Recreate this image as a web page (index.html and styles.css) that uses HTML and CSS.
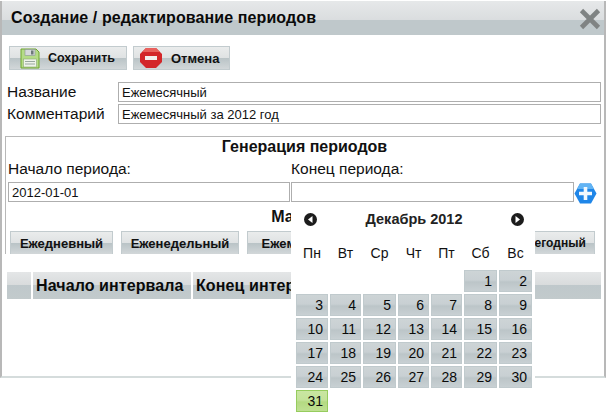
FILE: index.html
```html
<!DOCTYPE html>
<html lang="ru">
<head>
<meta charset="utf-8">
<title>Создание / редактирование периодов</title>
<link rel="stylesheet" href="styles.css">
</head>
<body>
<div class="dialog">
  <header class="titlebar">
    <h1 class="title">Создание / редактирование периодов</h1>
    <svg class="close" width="22" height="22" viewBox="0 0 22 22"><path d="M2.5 2.5 L19.5 19.5 M19.5 2.5 L2.5 19.5" stroke="#7f8383" stroke-width="4.6" fill="none"/></svg>
  </header>
  <div class="toolbar">
    <button class="btn btn-save" type="button">
      <svg class="btn-icon" width="20" height="21" viewBox="0 0 20 21">
        <path d="M1 1 H16 L19 4 V20 H1 Z" fill="#b5dc87" stroke="#6fa52f"/>
        <rect x="5" y="1.5" width="10" height="6" fill="#d6dadb" stroke="#8a9494" stroke-width=".6"/>
        <rect x="11" y="2.5" width="2.5" height="4" fill="#6d7878"/>
        <rect x="3.5" y="11" width="13" height="8" fill="#eef3ea" stroke="#8aa873" stroke-width=".6"/>
        <path d="M5 13.5 H15 M5 16 H15" stroke="#9aa8a0"/>
      </svg>
      <span>Сохранить</span>
    </button>
    <button class="btn btn-cancel" type="button">
      <svg class="btn-icon" width="22" height="20" viewBox="0 0 22 20">
        <path d="M6 0 H16 L22 6 V14 L16 20 H6 L0 14 V6 Z" fill="#d3262a"/>
        <path d="M6 0 H16 L20 4 H2 Z" fill="#e8605c"/>
        <rect x="5" y="8" width="12" height="4" fill="#f2eeee"/>
      </svg>
      <span>Отмена</span>
    </button>
  </div>
  <div class="form-row"><label class="form-label">Название</label><input class="input" type="text" value="Ежемесячный"></div>
  <div class="form-row"><label class="form-label">Комментарий</label><input class="input" type="text" value="Ежемесячный за 2012 год"></div>
  <section class="generator">
    <h2 class="section-title">Генерация периодов</h2>
    <div class="period-grid">
      <label class="period-label">Начало периода:</label>
      <label class="period-label">Конец периода:</label>
      <span></span>
      <input class="input" type="text" value="2012-01-01">
      <input class="input" type="text" value="">
      <svg class="add" width="23" height="21" viewBox="0 0 23 21">
        <path d="M6 0.5 H17 L22.5 10.5 L17 20.5 H6 L0.5 10.5 Z" fill="#1f86e8"/>
        <path d="M6 0.5 H17 L20 6 H3 Z" fill="#62b4f4"/>
        <path d="M11.5 4 V17 M5 10.5 H18" stroke="#f2f8fd" stroke-width="3.6"/>
      </svg>
    </div>
    <h2 class="section-title mask-title">Мастера</h2>
    <div class="presets">
      <button class="btn preset preset-day" type="button">Ежедневный</button>
      <button class="btn preset preset-week" type="button">Еженедельный</button>
      <button class="btn preset preset-month" type="button">Ежемесячный</button>
      <button class="btn preset preset-quarter" type="button">Ежеквартальный</button>
      <button class="btn preset preset-year" type="button">Ежегодный</button>
    </div>
  </section>
  <div class="table-head">
    <div class="th th-check"></div>
    <div class="th th-start">Начало интервала</div>
    <div class="th th-end">Конец интервала</div>
  </div>
  <div class="calendar">
    <div class="cal-head">
      <svg width="13" height="13" viewBox="0 0 13 13"><circle cx="6.5" cy="6.5" r="6.5" fill="#1c1c1c"/><path d="M8.5 3 L4 6.5 L8.5 10 Z" fill="#fff"/></svg>
      <span class="cal-title">Декабрь 2012</span>
      <svg width="13" height="13" viewBox="0 0 13 13"><circle cx="6.5" cy="6.5" r="6.5" fill="#1c1c1c"/><path d="M4.5 3 L9 6.5 L4.5 10 Z" fill="#fff"/></svg>
    </div>
    <div class="cal-grid">
      <div class="dow">Пн</div><div class="dow">Вт</div><div class="dow">Ср</div><div class="dow">Чт</div><div class="dow">Пт</div><div class="dow">Сб</div><div class="dow">Вс</div>
      <div class="blank"></div><div class="blank"></div><div class="blank"></div><div class="blank"></div><div class="blank"></div>
      <div class="day">1</div><div class="day">2</div>
      <div class="day">3</div><div class="day">4</div><div class="day">5</div><div class="day">6</div><div class="day">7</div><div class="day">8</div><div class="day">9</div>
      <div class="day">10</div><div class="day">11</div><div class="day">12</div><div class="day">13</div><div class="day">14</div><div class="day">15</div><div class="day">16</div>
      <div class="day">17</div><div class="day">18</div><div class="day">19</div><div class="day">20</div><div class="day">21</div><div class="day">22</div><div class="day">23</div>
      <div class="day">24</div><div class="day">25</div><div class="day">26</div><div class="day">27</div><div class="day">28</div><div class="day">29</div><div class="day">30</div>
      <div class="day today">31</div>
    </div>
  </div>
</div>
</body>
</html>
```
FILE: styles.css
```css
* { box-sizing: border-box; }
html, body { margin: 0; padding: 0; background: #fff; }
body {
  width: 606px;
  height: 417px;
  overflow: hidden;
  font-family: "Liberation Sans", Arial, sans-serif;
  color: #111;
}
.dialog {
  position: relative;
  width: 606px;
  height: 377px;
  margin-top: 1px;
  background: #fff;
  border-left: 2px solid #b8b8b8;
  border-right: 2px solid #b8b8b8;
  border-bottom: 2px solid #d5dcdc;
}
.titlebar {
  height: 34px;
  display: flex;
  align-items: center;
  justify-content: space-between;
  padding: 0 3px 0 9px;
  background: linear-gradient(#e6e8e9 0, #dadddf 19px, #bfc8cb 19px, #bfc8cb 100%);
}
.title {
  margin: 0;
  font-size: 16px;
  letter-spacing: 0.1px;
  font-weight: bold;
  color: #0a0a0a;
}
.toolbar {
  display: flex;
  gap: 6px;
  padding: 11px 0 0 7px;
  height: 47px;
}
.btn {
  display: flex;
  align-items: center;
  height: 24px;
  padding: 0;
  border: 1px solid #c2cbce;
  background: linear-gradient(#eaecec 0, #dfe2e3 50%, #b9c3c6 50%, #d2d7d9 100%);
  font-family: "Liberation Sans", Arial, sans-serif;
  font-size: 13px;
  font-weight: bold;
  color: #111;
}
.btn-save { width: 118px; padding-left: 10px; gap: 8px; font-size: 12.5px; }
.btn-cancel { width: 97px; padding-left: 6px; gap: 9px; }
.btn-icon { flex: none; }
.form-row {
  display: flex;
  height: 20px;
  margin-bottom: 2px;
  padding-left: 5px;
}
.form-label {
  width: 111px;
  font-size: 15.5px;
  line-height: 20px;
}
.input {
  display: block;
  height: 20px;
  padding: 0 3px;
  margin: 0;
  border: 1px solid #aeaeae;
  border-radius: 0;
  background: #fff;
  font-family: "Liberation Sans", Arial, sans-serif;
  font-size: 13px;
  color: #111;
  outline: none;
}
.form-row .input { width: 483px; }
.generator {
  width: 596px;
  height: 118px;
  margin: 12px 0 0 3px;
  overflow: hidden;
  border-top: 1px solid #b8b8b8;
  border-left: 1px solid #b8b8b8;
  padding: 0 0 0 2px;
}
.section-title {
  margin: 0;
  font-size: 16px;
  font-weight: bold;
  text-align: center;
  line-height: 19px;
}
.period-grid {
  display: grid;
  grid-template-columns: 282px 283px 23px;
  column-gap: 1px;
  margin-top: 3px;
}
.period-label {
  font-size: 15.5px;
  line-height: 19px;
  height: 23px;
}
.period-grid .input { width: 100%; }
.add { margin-left: -1px; margin-top: 1px; }
.mask-title { margin-top: 3px; }
.presets {
  display: flex;
  gap: 8px;
  padding: 5px 0 0 2px;
}
.preset {
  height: 24px;
  justify-content: center;
  flex: none;
}
.preset-day { width: 103px; }
.preset-week { width: 118px; }
.preset-month { width: 120px; }
.preset-quarter { width: 118px; }
.preset-year { width: 94px; padding-left: 8px; font-size: 12px; }
.table-head {
  display: flex;
  gap: 2px;
  margin: 18px 0 0 5px;
  height: 27px;
  width: 594px;
}
.th {
  display: flex;
  align-items: center;
  padding-left: 3px;
  font-size: 16px;
  letter-spacing: 0.1px;
  font-weight: bold;
  color: #0a0a0a;
  background: linear-gradient(#e4e6e7 0, #d8dbdc 50%, #bfc8cb 50%, #c2cacc 100%);
}
.th-check { width: 24px; }
.th-start { width: 158px; }
.th-end { flex: 1; }
.calendar {
  position: absolute;
  left: 289px;
  top: 203px;
  width: 244px;
  height: 212px;
  background: #fff;
  padding: 0 0 0 5px;
}
.cal-head {
  display: flex;
  align-items: center;
  justify-content: space-between;
  width: 220px;
  height: 30px;
  margin-left: 8px;
}
.cal-title {
  font-size: 14.5px;
  font-weight: bold;
  color: #222;
}
.cal-grid {
  display: grid;
  grid-template-columns: 32px 31px 33px 31px 31px 33px 33px;
  grid-template-rows: 26px;
  grid-auto-rows: 22px;
  gap: 2px;
  margin-top: 8px;
}
.dow {
  font-size: 14px;
  line-height: 22px;
  text-align: center;
  color: #111;
}
.day {
  border: 1px solid #c0cacd;
  background: linear-gradient(#cdd4d6 0, #c9d0d3 45%, #bcc5c8 55%, #c8d0d3 100%);
  font-size: 14px;
  line-height: 20px;
  text-align: right;
  padding-right: 4px;
  color: #0a0a0a;
}
.today {
  border-color: #96cc5e;
  background: linear-gradient(#c9e6a2 0, #c4e39a 45%, #b4da82 55%, #bfe092 100%);
}
.close { margin-top: 1px; }
```
